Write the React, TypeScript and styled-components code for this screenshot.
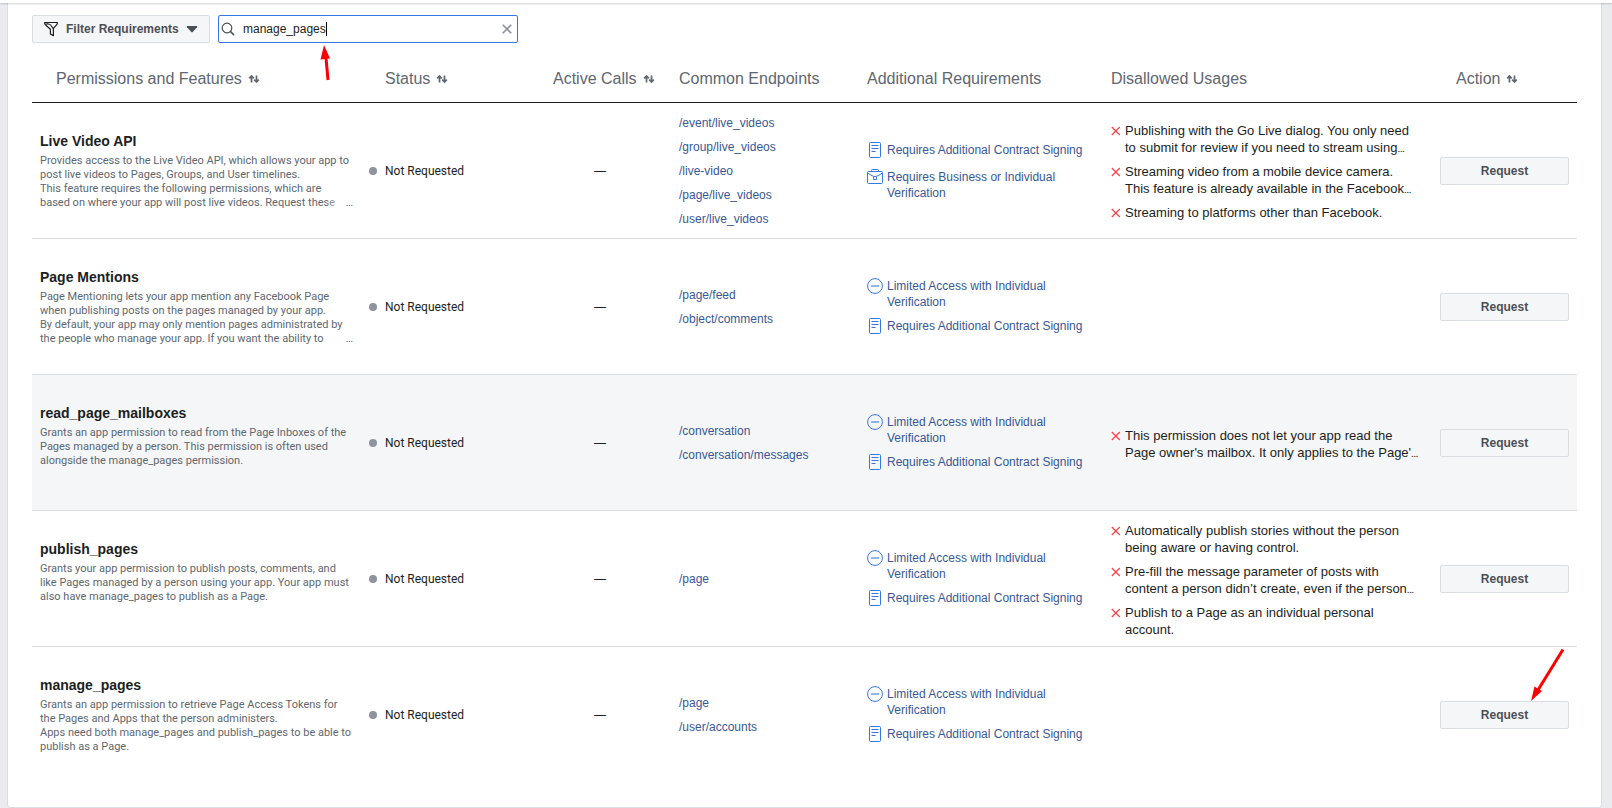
import React, { useState } from 'react';
import styled, { createGlobalStyle } from 'styled-components';

const arial = '"Liberation Sans", Arial, sans-serif';
const roboto = 'Roboto, "Liberation Sans", sans-serif';

const GlobalStyle = createGlobalStyle`
  * { box-sizing: border-box; }
  body {
    margin: 0;
    background: #e9ebee;
    color: #1c1e21;
    font-family: ${arial};
    font-size: 12px;
    line-height: 16px;
  }
`;

const TopStrip = styled.header`
  position: relative;
  height: 3px;
  background: #fff;
  box-shadow: 0 1px 2px rgba(0, 0, 0, 0.18);
`;

const Panel = styled.main`
  margin: 0 10px 0 7px;
  padding: 12px 24px 24px;
  background: #fff;
  border: 1px solid #dadde1;
  border-top: 0;
  border-radius: 0 0 4px 4px;
`;

const Toolbar = styled.div`
  display: flex;
  gap: 8px;
  margin-bottom: 12px;
`;

const Button = styled.button`
  display: flex;
  align-items: center;
  justify-content: center;
  height: 28px;
  padding: 0 12px;
  background: #f5f6f7;
  border: 1px solid #dadde1;
  border-radius: 2px;
  color: #4b4f56;
  font: bold 12px/16px ${arial};
  white-space: nowrap;
  cursor: pointer;
`;

const FilterButton = styled(Button)`
  justify-content: flex-start;
  width: 178px;
  gap: 7px;
  padding: 0 10px;

  svg { flex: none; }
`;

const RequestButton = styled(Button)`
  width: 100%;
`;

const SearchBox = styled.label`
  position: relative;
  display: flex;
  align-items: center;
  gap: 8px;
  width: 300px;
  height: 28px;
  padding: 0 4px 0 2px;
  background: #fff;
  border: 1px solid #3578e5;
  border-radius: 2px;
`;

const SearchInput = styled.input`
  flex: 1;
  min-width: 0;
  padding: 0;
  border: 0;
  outline: 0;
  background: none;
  color: #1c1e21;
  caret-color: transparent;
  font: 12px/16px ${arial};
`;

const Caret = styled.span`
  position: absolute;
  top: 6px;
  left: 107px;
  width: 1px;
  height: 14px;
  background: #000;
`;

const ClearButton = styled.button`
  display: flex;
  padding: 0;
  border: 0;
  background: none;
  cursor: pointer;
`;

const SearchArrow = styled.svg`
  position: absolute;
  top: 28px;
  left: 100px;
  pointer-events: none;
`;

const ActionArrow = styled.svg`
  position: absolute;
  top: 0;
  right: 8px;
  pointer-events: none;
`;

const Table = styled.table`
  width: 100%;
  min-width: 1400px;
  table-layout: fixed;
  border-collapse: separate;
  border-spacing: 0;
`;

const Col = styled.col<{ $width?: number }>`
  width: ${(p) => (p.$width ? `${p.$width}px` : 'auto')};
`;

const HeadCell = styled.th<{ $sortable?: boolean }>`
  height: 48px;
  padding: 0 0 0 ${(p) => (p.$sortable ? 24 : 8)}px;
  border-bottom: 1px solid #1c1e21;
  color: #606770;
  font-size: 16px;
  font-weight: 400;
  line-height: 20px;
  text-align: left;
  white-space: nowrap;
`;

const SortButton = styled.button`
  display: flex;
  align-items: center;
  gap: 6px;
  padding: 0;
  border: 0;
  background: none;
  color: inherit;
  font: inherit;
  cursor: pointer;
`;

const Row = styled.tr<{ $active?: boolean }>`
  background: ${(p) => (p.$active ? '#f5f6f7' : '#fff')};

  &:last-child > td {
    border-bottom-color: transparent;
  }
`;

const Cell = styled.td<{ $center?: boolean }>`
  position: relative;
  height: 136px;
  padding: 0 8px;
  border-bottom: 1px solid #dadde1;
  text-align: ${(p) => (p.$center ? 'center' : 'left')};
  vertical-align: middle;
`;

const Name = styled.h3`
  margin: 0 0 4px;
  font-size: 14px;
  line-height: 18px;
`;

const Description = styled.p`
  position: relative;
  min-height: 56px;
  margin: 0;
  color: #606770;
  font: 11px/14px ${roboto};
  white-space: pre-line;
`;

const More = styled.span`
  position: absolute;
  right: 0;
  bottom: 0;

  &::before {
    content: '';
    position: absolute;
    right: 100%;
    width: 20px;
    height: 14px;
    background: linear-gradient(to right, rgba(255, 255, 255, 0), #fff);
  }
`;

const Status = styled.div`
  display: flex;
  align-items: center;
  gap: 8px;
  font-family: ${roboto};

  &::before {
    content: '';
    width: 8px;
    height: 8px;
    border-radius: 50%;
    background: #8d949e;
  }
`;

const List = styled.ul<{ $gap: number }>`
  display: flex;
  flex-direction: column;
  gap: ${(p) => p.$gap}px;
  margin: 0;
  padding: 0;
  list-style: none;
`;

const NoteList = styled(List)`
  padding-top: 2px;
`;

const Link = styled.a`
  color: #385898;
  text-decoration: none;
`;

const Requirement = styled.li`
  display: flex;
  gap: 4px;
  min-height: 19px;

  svg { flex: none; }
`;

const Usage = styled.li`
  display: flex;
  gap: 4px;
  padding-right: 4px;
  font-size: 13px;
  line-height: 17px;

  svg {
    flex: none;
    margin-top: 4px;
  }
`;

const Ellipsis = styled.span`
  font: 11px/14px ${roboto};
`;

const FilterIcon = () => (
  <svg width="16" height="16" viewBox="0 0 16 16" fill="none" stroke="#1c1e21" strokeWidth="1.2" strokeLinejoin="round">
    <path d="M1.500 1.500h13c0 1-.6 2-1.400 2.800L10.400 7.400v7.200L7.400 13V8.200L2.900 4.300C2.100 3.500 1.500 2.500 1.500 1.500z" />
    <path d="M2.500 3.200c1.500-.6 4.500-.3 5.600 1.300.6.800.9 1.700 1.900 2.900" />
  </svg>
);

const CaretDownIcon = () => (
  <svg width="12" height="8" viewBox="0 0 12 8">
    <path d="M1.600 1h8.800c.7 0 1 .7.600 1.200L6.700 6.900c-.4.4-1 .4-1.400 0L1 2.200C.6 1.700.9 1 1.600 1z" fill="#4b4f56" />
  </svg>
);

const SearchIcon = () => (
  <svg width="14" height="14" viewBox="0 0 14 14" fill="none" stroke="#4b4f56">
    <circle cx="6" cy="6" r="4.800" strokeWidth="1.200" />
    <path d="M9.600 9.600l3 3" strokeWidth="1.500" strokeLinecap="round" />
  </svg>
);

const ClearIcon = () => (
  <svg width="12" height="12" viewBox="0 0 12 12" stroke="#8d949e" strokeWidth="1.600">
    <path d="M1.700 1.700l8.600 8.600M10.300 1.700l-8.600 8.600" />
  </svg>
);

const SortIcon = () => (
  <svg width="12" height="10" viewBox="0 0 12 10" fill="none" stroke="#606770" strokeWidth="1.700">
    <path d="M3.500 8.500V2.500M1.200 4.400l2.300-2.400 2.300 2.400" />
    <path d="M8.500 1.500v6M6.200 5.600l2.300 2.400 2.300-2.400" />
  </svg>
);

const ContractIcon = () => (
  <svg width="16" height="16" viewBox="0 0 16 16" fill="none" stroke="#3578e5">
    <rect x="2.500" y=".500" width="11" height="15" rx="1" />
    <path d="M4.500 3.500h7M4.500 6.500h7M4.500 9.500h4" />
  </svg>
);

const BriefcaseIcon = () => (
  <svg width="16" height="16" viewBox="0 0 16 16" fill="none" stroke="#3578e5">
    <rect x=".500" y="2.500" width="15" height="12" rx="1" />
    <path d="M4.500 2.500v-1q0-1 1-1h5q1 0 1 1v1M.800 4l3.200 2.200 2.500 1M15.200 4L12 6.200l-2.500 1" />
    <path d="M6.500 7.500h3v3h-3z" />
  </svg>
);

const LimitedIcon = () => (
  <svg width="16" height="16" viewBox="0 0 16 16" fill="none" stroke="#3578e5">
    <circle cx="8" cy="8" r="7.400" />
    <path d="M4 8h8" strokeWidth="2" strokeOpacity=".55" />
  </svg>
);

const CrossIcon = () => (
  <svg width="10" height="10" viewBox="0 0 10 10" stroke="#fa3e3e" strokeWidth="1.100">
    <path d="M.800 1l8 8M8.800 1l-8 8" />
  </svg>
);

type RequirementKind = 'contract' | 'business' | 'limited';

const requirements: Record<RequirementKind, { icon: React.ReactNode; label: string }> = {
  contract: { icon: <ContractIcon />, label: 'Requires Additional Contract Signing' },
  business: { icon: <BriefcaseIcon />, label: 'Requires Business or Individual Verification' },
  limited: { icon: <LimitedIcon />, label: 'Limited Access with Individual Verification' },
};

interface Permission {
  name: string;
  description: string;
  truncated?: boolean;
  active?: boolean;
  marked?: boolean;
  endpoints: string[];
  needs: RequirementKind[];
  disallowed: { text: string; cut?: boolean }[];
}

const permissions: Permission[] = [
  {
    name: 'Live Video API',
    description:
      'Provides access to the Live Video API, which allows your app to post live videos to Pages, Groups, and User timelines.\nThis feature requires the following permissions, which are based on where your app will post live videos. Request these',
    truncated: true,
    endpoints: ['/event/live_videos', '/group/live_videos', '/live-video', '/page/live_videos', '/user/live_videos'],
    needs: ['contract', 'business'],
    disallowed: [
      { text: 'Publishing with the Go Live dialog. You only need to submit for review if you need to stream using', cut: true },
      { text: 'Streaming video from a mobile device camera. This feature is already available in the Facebook', cut: true },
      { text: 'Streaming to platforms other than Facebook.' },
    ],
  },
  {
    name: 'Page Mentions',
    description:
      'Page Mentioning lets your app mention any Facebook Page when publishing posts on the pages managed by your app.\nBy default, your app may only mention pages administrated by the people who manage your app. If you want the ability to',
    truncated: true,
    endpoints: ['/page/feed', '/object/comments'],
    needs: ['limited', 'contract'],
    disallowed: [],
  },
  {
    name: 'read_page_mailboxes',
    description:
      'Grants an app permission to read from the Page Inboxes of the Pages managed by a person. This permission is often used alongside the manage_pages permission.',
    active: true,
    endpoints: ['/conversation', '/conversation/messages'],
    needs: ['limited', 'contract'],
    disallowed: [
      { text: "This permission does not let your app read the Page owner's mailbox. It only applies to the Page'", cut: true },
    ],
  },
  {
    name: 'publish_pages',
    description:
      'Grants your app permission to publish posts, comments, and like Pages managed by a person using your app. Your app must also have manage_pages to publish as a Page.',
    endpoints: ['/page'],
    needs: ['limited', 'contract'],
    disallowed: [
      { text: 'Automatically publish stories without the person being aware or having control.' },
      { text: 'Pre-fill the message parameter of posts with content a person didn’t create, even if the person', cut: true },
      { text: 'Publish to a Page as an individual personal account.' },
    ],
  },
  {
    name: 'manage_pages',
    description:
      'Grants an app permission to retrieve Page Access Tokens for the Pages and Apps that the person administers.\nApps need both manage_pages and publish_pages to be able to publish as a Page.',
    marked: true,
    endpoints: ['/page', '/user/accounts'],
    needs: ['limited', 'contract'],
    disallowed: [],
  },
];

const columns = [
  { label: 'Permissions and Features', width: 329, sortable: true },
  { label: 'Status', width: 168, sortable: true },
  { label: 'Active Calls', width: 142, sortable: true },
  { label: 'Common Endpoints', width: 188 },
  { label: 'Additional Requirements', width: 244 },
  { label: 'Disallowed Usages' },
  { label: 'Action', width: 145, sortable: true },
];

export default function App() {
  const [query, setQuery] = useState('manage_pages');

  return (
    <>
      <GlobalStyle />
      <TopStrip />
      <Panel>
        <Toolbar>
          <FilterButton type="button">
            <FilterIcon />
            Filter Requirements
            <CaretDownIcon />
          </FilterButton>
          <SearchBox>
            <SearchIcon />
            <SearchInput
              type="text"
              aria-label="Search permissions"
              value={query}
              onChange={(e) => setQuery(e.target.value)}
            />
            <Caret />
            <ClearButton type="button" aria-label="Clear search" onClick={() => setQuery('')}>
              <ClearIcon />
            </ClearButton>
            <SearchArrow width="12" height="40" viewBox="0 0 12 40">
              <path d="M7 14l2 22" stroke="#f00" strokeWidth="3" />
              <path d="M5 1L1.500 15.500 11 14.500z" fill="#f00" />
            </SearchArrow>
          </SearchBox>
        </Toolbar>
        <Table>
          <colgroup>
            {columns.map((c) => (
              <Col key={c.label} $width={c.width} />
            ))}
          </colgroup>
          <thead>
            <tr>
              {columns.map((c) => (
                <HeadCell key={c.label} scope="col" $sortable={c.sortable}>
                  {c.sortable ? (
                    <SortButton type="button">
                      {c.label}
                      <SortIcon />
                    </SortButton>
                  ) : (
                    c.label
                  )}
                </HeadCell>
              ))}
            </tr>
          </thead>
          <tbody>
            {permissions.map((p) => (
              <Row key={p.name} $active={p.active}>
                <Cell>
                  <Name>{p.name}</Name>
                  <Description>
                    {p.description}
                    {p.truncated && <More>…</More>}
                  </Description>
                </Cell>
                <Cell>
                  <Status>Not Requested</Status>
                </Cell>
                <Cell $center>—</Cell>
                <Cell>
                  <List $gap={8}>
                    {p.endpoints.map((e) => (
                      <li key={e}>
                        <Link href="#">{e}</Link>
                      </li>
                    ))}
                  </List>
                </Cell>
                <Cell>
                  <NoteList $gap={8}>
                    {p.needs.map((n) => (
                      <Requirement key={n}>
                        {requirements[n].icon}
                        <Link href="#">{requirements[n].label}</Link>
                      </Requirement>
                    ))}
                  </NoteList>
                </Cell>
                <Cell>
                  <NoteList $gap={7}>
                    {p.disallowed.map((d) => (
                      <Usage key={d.text}>
                        <CrossIcon />
                        <span>
                          {d.text}
                          {d.cut && <Ellipsis>…</Ellipsis>}
                        </span>
                      </Usage>
                    ))}
                  </NoteList>
                </Cell>
                <Cell>
                  <RequestButton type="button">Request</RequestButton>
                  {p.marked && (
                    <ActionArrow width="40" height="56" viewBox="0 0 40 56">
                      <path d="M34 2.500L9 43" stroke="#f00" strokeWidth="3" />
                      <path d="M2 54l3.500-14.500 7.500 4.500z" fill="#f00" />
                    </ActionArrow>
                  )}
                </Cell>
              </Row>
            ))}
          </tbody>
        </Table>
      </Panel>
    </>
  );
}
